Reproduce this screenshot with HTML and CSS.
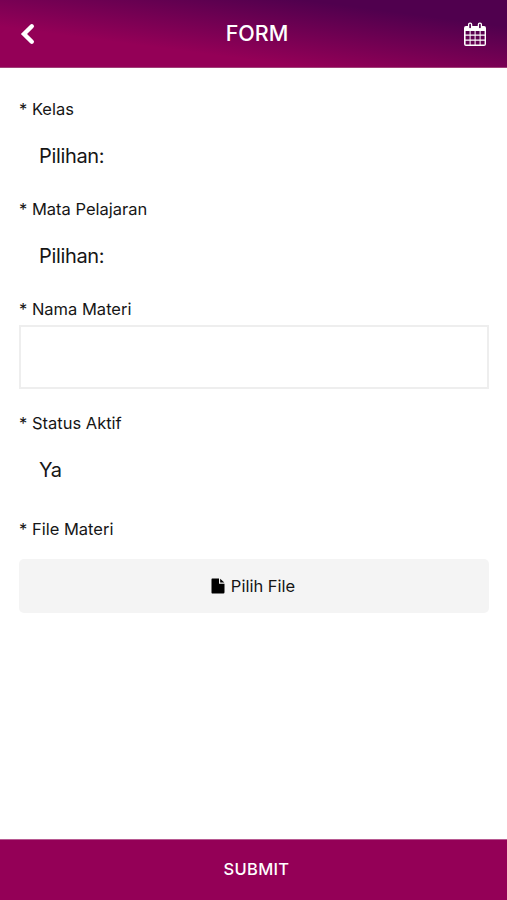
FILE: index.html
```html
<!DOCTYPE html>
<html lang="id">
<head>
<meta charset="utf-8">
<title>Form</title>
<link rel="stylesheet" href="styles.css">
</head>
<body>
<header class="topbar">
  <svg class="back" viewBox="0 0 16 22"><path d="M11.800 3.300 4 11l7.800 7.700" fill="none" stroke="#fff" stroke-width="4.400" stroke-linejoin="miter" stroke-linecap="round"/></svg>
  <h1 class="title">FORM</h1>
  <svg class="calendar" viewBox="0 0 24 25">
    <path fill="#fff" fill-rule="evenodd" d="M3 4h18a2 2 0 0 1 2 2v16a2 2 0 0 1-2 2H3a2 2 0 0 1-2-2V6a2 2 0 0 1 2-2zM2.6 9v3.5h4V9zm5 0v3.5h4V9zm5 0v3.5h4V9zm5 0v3.5h4V9zM2.6 13.8v3.7h4v-3.7zm5 0v3.7h4v-3.7zm5 0v3.7h4v-3.7zm5 0v3.7h4v-3.7zM2.6 18.8v3.7h4v-3.7zm5 0v3.7h4v-3.7zm5 0v3.7h4v-3.7zm5 0v3.7h4v-3.7z"/>
    <g fill="#52004e" stroke="#fff" stroke-width="1.3"><rect x="5.600" y="1.200" width="3" height="5.600" rx="1.400"/><rect x="15.400" y="1.200" width="3" height="5.600" rx="1.400"/></g>
  </svg>
</header>
<main class="form">
  <div class="field"><div class="label">* Kelas</div><div class="select">Pilihan:</div></div>
  <div class="field"><div class="label">* Mata Pelajaran</div><div class="select">Pilihan:</div></div>
  <div class="field field-text"><label class="label" for="nama">* Nama Materi</label><input class="input" id="nama" type="text"></div>
  <div class="field field-status"><div class="label">* Status Aktif</div><div class="select">Ya</div></div>
  <div class="field"><div class="label">* File Materi</div>
    <button class="file" type="button"><svg class="file-icon" viewBox="0 0 14 16"><path d="M1.2.5H8v5.2h5.5v8.6q0 1.2-1.2 1.2H1.2Q.5 15.500.5 14.500V1.500Q.5.5 1.200.5z"/><path d="M9.200.7 13.300 4.600H9.200z"/></svg>Pilih File</button>
  </div>
</main>
<button class="submit" type="button">SUBMIT</button>
</body>
</html>
```

FILE: styles.css
```css
* { box-sizing: border-box; }
body {
  margin: 0;
  height: 900px;
  display: flex;
  flex-direction: column;
  background: #fff;
  color: #161616;
  font-family: Inter, "Liberation Sans", sans-serif;
}
.topbar {
  height: 68px;
  padding: 0 20px;
  display: flex;
  align-items: center;
  justify-content: space-between;
  background: linear-gradient(to top right, #940057 30%, #50004e 80%);
  border-bottom: 1px solid #a04078;
}
.back { width: 16px; height: 22px; }
.title { margin: 0 0 1px 15px; color: #fff; font-size: 21.5px; font-weight: 500; }
.calendar { width: 24px; height: 25px; margin-top: 2px; }
.form { flex: 1; padding: 31px 18px 0 19px; }
.field { height: 100px; }
.field-text { height: 114px; }
.field-status { height: 106px; }
.label { display: block; height: 20px; line-height: 20px; font-size: 16.5px; }
.select { margin-top: 24px; padding-left: 20px; line-height: 26px; font-size: 20px; letter-spacing: -0.35px; }
.input {
  display: block;
  width: 100%;
  height: 64px;
  margin-top: 6px;
  padding: 0 16px;
  border: 2px solid #eee;
  background: #fff;
  font: inherit;
}
.file {
  display: flex;
  align-items: center;
  justify-content: center;
  gap: 6px;
  width: 100%;
  height: 54px;
  margin-top: 20px;
  padding: 0 2px 1px 0;
  border: 0;
  border-radius: 5px;
  background: #f4f4f4;
  color: #161616;
  font: 16.5px Inter, sans-serif;
}
.file-icon { width: 14px; height: 16px; fill: #000; }
.submit {
  height: 61px;
  padding: 0 0 2px 6px;
  border: 0;
  border-top: 1px solid #b85a92;
  background: #940057;
  color: #fff;
  font: 500 16.5px Inter, sans-serif;
  letter-spacing: 0.3px;
}
```
